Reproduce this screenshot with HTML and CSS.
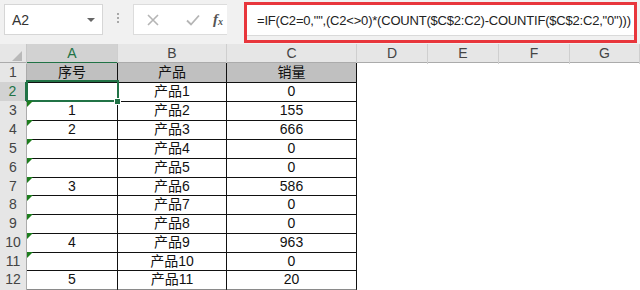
FILE: index.html
```html
<!DOCTYPE html>
<html lang="zh-CN">
<head>
  <meta charset="UTF-8">
  <title>序号公式</title>
  <link rel="stylesheet" href="styles.css">
</head>
<body>

  <!-- Formula bar -->
  <div class="formula-bar">
    <div class="name-box">
      <span>A2</span>
      <span class="caret"></span>
    </div>
    <div class="grip"><i></i><i></i><i></i></div>
    <div class="fx-buttons">
      <svg class="btn-cancel" width="14" height="14" viewBox="0 0 14 14"><path d="M2 2 L12 12 M12 2 L2 12" stroke="#b5b5b5" stroke-width="1.6" fill="none"/></svg>
      <svg class="btn-enter" width="16" height="14" viewBox="0 0 16 14"><path d="M2 7.5 L6 11.5 L14 2.5" stroke="#b5b5b5" stroke-width="1.8" fill="none"/></svg>
      <span class="fx">f<sub>x</sub></span>
    </div>
    <div class="formula-frame">
      <div class="formula-input">=IF(C2=0,"",(C2&lt;&gt;0)*(COUNT($C$2:C2)-COUNTIF($C$2:C2,"0")))</div>
    </div>
  </div>

  <!-- Sheet -->
  <div class="sheet">
    <div class="col-heads">
      <div class="corner"></div>
      <div class="col-head active">A</div>
      <div class="col-head">B</div>
      <div class="col-head">C</div>
      <div class="col-head">D</div>
      <div class="col-head">E</div>
      <div class="col-head">F</div>
      <div class="col-head">G</div>
    </div>

    <div class="row title">
      <div class="row-head">1</div>
      <div class="cell">序号</div>
      <div class="cell">产品</div>
      <div class="cell">销量</div>
    </div>
    <div class="row">
      <div class="row-head active">2</div>
      <div class="cell selected"></div>
      <div class="cell">产品1</div>
      <div class="cell">0</div>
    </div>
    <div class="row">
      <div class="row-head">3</div>
      <div class="cell flag">1</div>
      <div class="cell">产品2</div>
      <div class="cell">155</div>
    </div>
    <div class="row">
      <div class="row-head">4</div>
      <div class="cell flag">2</div>
      <div class="cell">产品3</div>
      <div class="cell">666</div>
    </div>
    <div class="row">
      <div class="row-head">5</div>
      <div class="cell flag"></div>
      <div class="cell">产品4</div>
      <div class="cell">0</div>
    </div>
    <div class="row">
      <div class="row-head">6</div>
      <div class="cell flag"></div>
      <div class="cell">产品5</div>
      <div class="cell">0</div>
    </div>
    <div class="row short">
      <div class="row-head">7</div>
      <div class="cell flag">3</div>
      <div class="cell">产品6</div>
      <div class="cell">586</div>
    </div>
    <div class="row">
      <div class="row-head">8</div>
      <div class="cell flag"></div>
      <div class="cell">产品7</div>
      <div class="cell">0</div>
    </div>
    <div class="row">
      <div class="row-head">9</div>
      <div class="cell flag"></div>
      <div class="cell">产品8</div>
      <div class="cell">0</div>
    </div>
    <div class="row">
      <div class="row-head">10</div>
      <div class="cell flag">4</div>
      <div class="cell">产品9</div>
      <div class="cell">963</div>
    </div>
    <div class="row short">
      <div class="row-head">11</div>
      <div class="cell flag"></div>
      <div class="cell">产品10</div>
      <div class="cell">0</div>
    </div>
    <div class="row last">
      <div class="row-head">12</div>
      <div class="cell">5</div>
      <div class="cell">产品11</div>
      <div class="cell">20</div>
    </div>
  </div>

</body>
</html>
```

FILE: styles.css
```css
body {
  margin: 0;
  padding: 0;
  width: 640px;
  height: 290px;
  overflow: hidden;
  background: #fff;
  font-family: "Liberation Sans", "Noto Sans CJK SC", sans-serif;
}

/* Formula bar */
.formula-bar {
  height: 44px;
  background: #f1f1f1;
  display: flex;
  align-items: flex-start;
  box-sizing: border-box;
}

.name-box {
  margin: 4px 0 0 4px;
  width: 99px;
  height: 31px;
  box-sizing: border-box;
  border: 1px solid #d6d6d6;
  background: #fff;
  display: flex;
  align-items: center;
  justify-content: space-between;
  padding: 0 7px 0 7px;
  font-size: 14px;
  color: #333;
}

.caret {
  width: 0;
  height: 0;
  border-left: 4px solid transparent;
  border-right: 4px solid transparent;
  border-top: 4px solid #666;
}

.grip {
  width: 30px;
  height: 35px;
  display: flex;
  flex-direction: column;
  align-items: center;
  justify-content: center;
  gap: 2px;
}

.grip i {
  width: 2px;
  height: 2px;
  background: #a8a8a8;
}

.fx-buttons {
  margin-top: 4px;
  width: 94px;
  height: 31px;
  box-sizing: border-box;
  border: 1px solid #dcdcdc;
  border-right: none;
  background: #fff;
  display: flex;
  align-items: center;
}

.btn-cancel { margin-left: 12px; }
.btn-enter { margin-left: 25px; }

.fx {
  font-family: "Liberation Serif", serif;
  font-style: italic;
  font-weight: bold;
  font-size: 15px;
  color: #555;
  margin-left: 12px;
}

.fx sub {
  font-size: 10px;
  vertical-align: -1px;
}

/* Red annotation frame around the formula */
.formula-frame {
  margin: 2px 0 0 17px;
  width: 393px;
  height: 41px;
  box-sizing: border-box;
  border: 3px solid #e8363c;
  background: #f1f1f1;
}

.formula-input {
  height: 30px;
  background: #fff;
  border-bottom: 1px solid #dadada;
  padding-left: 10px;
  font-size: 13px;
  line-height: 32px;
  letter-spacing: -0.2px;
  color: #222;
  white-space: nowrap;
  overflow: hidden;
}

/* Sheet grid */
.sheet {
  font-size: 14px;
}

.col-heads {
  display: grid;
  grid-template-columns: 27px 91px 109px 130px 71px 71px 71px 1fr;
  height: 18px;
  background: #e6e6e6;
  border-bottom: 1px solid #ababab;
}

.corner {
  position: relative;
  border-right: 1px solid #c8c8c8;
}

.corner::after {
  content: '';
  position: absolute;
  right: 4px;
  bottom: 3px;
  border-left: 10px solid transparent;
  border-bottom: 10px solid #b9b9b9;
}

.col-head {
  text-align: center;
  line-height: 19px;
  color: #444;
  border-right: 1px solid #cfcfcf;
}

.col-head.active {
  background: #d2d2d2;
  color: #217346;
  border-bottom: 2px solid #217346;
  line-height: 18px;
}

.row {
  display: grid;
  grid-template-columns: 27px 91px 109px 130px;
  height: 19px;
}

.row.short {
  height: 18px;
}

.row-head {
  background: #e6e6e6;
  color: #444;
  text-align: center;
  line-height: 19px;
  border-right: 1px solid #ababab;
  border-bottom: 1px solid #d4d4d4;
  box-sizing: border-box;
}

.row-head.active {
  background: #d2d2d2;
  color: #217346;
  border-right: 2px solid #217346;
}

.cell {
  position: relative;
  text-align: center;
  line-height: 19px;
  color: #111;
  border-right: 1px solid #111;
  border-bottom: 1px solid #111;
  box-sizing: border-box;
  white-space: nowrap;
}

.row.short .cell,
.row.short .row-head {
  line-height: 18px;
}

.row.title .cell {
  background: #c0c0c0;
}

.row.last .cell {
  border-bottom: 2px solid #8a8a8a;
}

/* Green error indicator in the corner */
.cell.flag::before {
  content: '';
  position: absolute;
  left: 0;
  top: 0;
  border-top: 6px solid #1d7d1d;
  border-right: 6px solid transparent;
}

/* Active cell outline with fill handle */
.cell.selected::after {
  content: '';
  position: absolute;
  left: -1px;
  top: -2px;
  right: -2px;
  bottom: -1px;
  border: 2px solid #217346;
}

.cell.selected::before {
  content: '';
  position: absolute;
  right: -4px;
  bottom: -4px;
  width: 5px;
  height: 5px;
  background: #217346;
  border: 1px solid #fff;
  z-index: 2;
}
```
